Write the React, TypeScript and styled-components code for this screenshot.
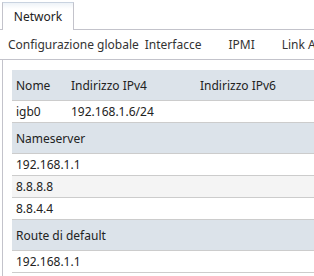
import React from "react";
import styled, { createGlobalStyle } from "styled-components";

const Global = createGlobalStyle`
  html, body { margin: 0; padding: 0; background: #fff; overflow: hidden; }
  body { font-family: "Noto Sans", "Open Sans", sans-serif; font-size: 12px; color: #2b2b2b; }
`;

const Page = styled.div`
  width: 314px;
  height: 276px;
  padding-top: 2px;
  box-sizing: border-box;
  overflow: hidden;
`;

const TabBar = styled.div`
  display: flex;
  height: 27px;
  padding-left: 2px;
  border-bottom: 1px solid #c3c3cb;
`;

const Tab = styled.div`
  width: 70px;
  height: 27px;
  margin-bottom: -1px;
  border: 1px solid #c3c3cb;
  border-top-color: #c9d3e0;
  border-bottom: none;
  background: linear-gradient(#eef3f8, #ffffff 6px);
  display: flex;
  align-items: center;
  justify-content: center;
  color: #222;
`;

const Nav = styled.div`
  display: flex;
  align-items: center;
  height: 29px;
  border-bottom: 1px solid #c3c3cb;
  white-space: nowrap;
`;

const NavItem = styled.span<{ $ml: number }>`
  margin-left: ${(p) => p.$ml}px;
  color: #333;
`;

const Panel = styled.div`
  margin-left: 2px;
  border-left: 1px solid #c3c3cb;
  padding: 10px 0 0 9px;
  height: 220px;
`;

const Table = styled.div`
  width: 340px;
`;

const Row = styled.div<{ $kind: "head" | "section" | "data"; $alt?: boolean }>`
  display: grid;
  grid-template-columns: 55px 129px 1fr;
  align-items: center;
  height: ${(p) => (p.$kind === "data" ? 21 : 30)}px;
  background: ${(p) =>
    p.$kind === "data" ? (p.$alt ? "#f4f4f4" : "#ffffff") : "#dce3ea"};
  border-bottom: 1px solid #cccccc;
  color: #222;
`;

const Cell = styled.div<{ $span?: boolean }>`
  padding-left: 4px;
  white-space: nowrap;
  grid-column: ${(p) => (p.$span ? "1 / -1" : "auto")};
`;

export default function App() {
  return (
    <>
      <Global />
      <Page>
        <TabBar>
          <Tab>Network</Tab>
        </TabBar>
        <Nav>
          <NavItem $ml={8}>Configurazione globale</NavItem>
          <NavItem $ml={6}>Interfacce</NavItem>
          <NavItem $ml={27}>IPMI</NavItem>
          <NavItem $ml={27}>Link Aggregation</NavItem>
        </Nav>
        <Panel>
          <Table>
            <Row $kind="head">
              <Cell>Nome</Cell>
              <Cell>Indirizzo IPv4</Cell>
              <Cell>Indirizzo IPv6</Cell>
            </Row>
            <Row $kind="data">
              <Cell>igb0</Cell>
              <Cell>192.168.1.6/24</Cell>
              <Cell></Cell>
            </Row>
            <Row $kind="section">
              <Cell $span>Nameserver</Cell>
            </Row>
            <Row $kind="data">
              <Cell $span>192.168.1.1</Cell>
            </Row>
            <Row $kind="data" $alt>
              <Cell $span>8.8.8.8</Cell>
            </Row>
            <Row $kind="data">
              <Cell $span>8.8.4.4</Cell>
            </Row>
            <Row $kind="section">
              <Cell $span>Route di default</Cell>
            </Row>
            <Row $kind="data">
              <Cell $span>192.168.1.1</Cell>
            </Row>
          </Table>
        </Panel>
      </Page>
    </>
  );
}
